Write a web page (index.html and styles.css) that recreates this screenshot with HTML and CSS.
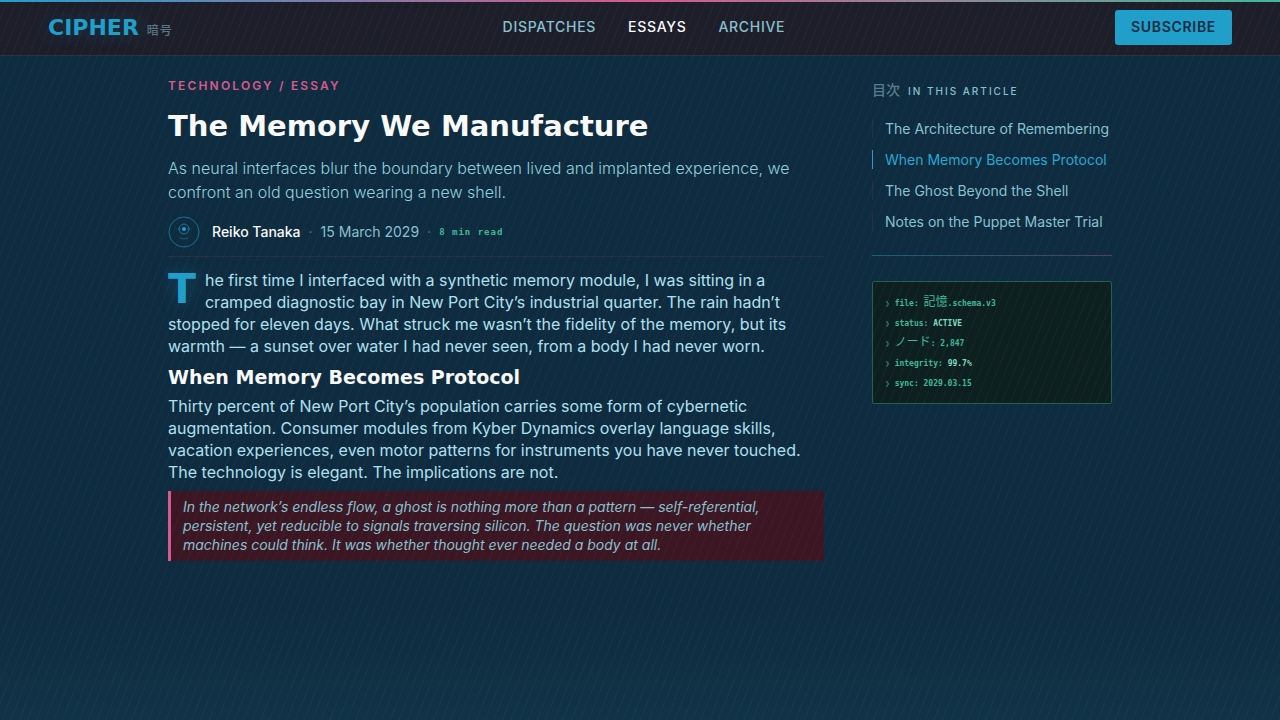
FILE: index.html
```html
<!DOCTYPE html>
<html lang="en">
<head>
<meta charset="utf-8">
<meta name="viewport" content="width=device-width, initial-scale=1">
<title>The Memory We Manufacture — Cipher</title>
<link rel="stylesheet" href="styles.css">
</head>
<body>
<header class="topbar">
  <a class="brand" href="#"><span class="brand-name">CIPHER</span><span class="brand-kanji" lang="ja">暗号</span></a>
  <nav class="nav" aria-label="Main">
    <a href="#">Dispatches</a>
    <a href="#" class="active" aria-current="page">Essays</a>
    <a href="#">Archive</a>
  </nav>
  <button type="button" class="subscribe">Subscribe</button>
</header>
<main class="layout">
  <article class="article">
    <p class="category">Technology / Essay</p>
    <h1>The Memory We Manufacture</h1>
    <p class="deck">As neural interfaces blur the boundary between lived and implanted experience, we confront an old question wearing a new shell.</p>
    <div class="byline">
      <svg class="avatar" viewBox="0 0 32 32" fill="none" stroke="#209fca" aria-hidden="true">
        <circle cx="16" cy="16" r="15" stroke-opacity=".6"/>
        <circle cx="16" cy="13" r="5" stroke-opacity=".65"/>
        <circle cx="16" cy="13" r="2" fill="#209fca" stroke="none"/>
        <path d="M9.5 13h3.5M19 13h3.5" stroke-opacity=".4"/>
        <path d="M12 22q4 2 8 0" stroke-opacity=".45"/>
      </svg>
      <span class="author">Reiko Tanaka</span>
      <span class="dot">·</span>
      <time datetime="2029-03-15">15 March 2029</time>
      <span class="dot">·</span>
      <span class="read">8 min read</span>
    </div>
    <div class="prose">
      <p class="lead">The first time I interfaced with a synthetic memory module, I was sitting in a cramped diagnostic bay in New Port City’s industrial quarter. The rain hadn’t stopped for eleven days. What struck me wasn’t the fidelity of the memory, but its warmth — a sunset over water I had never seen, from a body I had never worn.</p>
      <h2>When Memory Becomes Protocol</h2>
      <p>Thirty percent of New Port City’s population carries some form of cybernetic augmentation. Consumer modules from Kyber Dynamics overlay language skills, vacation experiences, even motor patterns for instruments you have never touched. The technology is elegant. The implications are not.</p>
      <blockquote>In the network’s endless flow, a ghost is nothing more than a pattern — self-referential, persistent, yet reducible to signals traversing silicon. The question was never whether machines could think. It was whether thought ever needed a body at all.</blockquote>
    </div>
  </article>
  <aside class="sidebar">
    <nav class="toc" aria-labelledby="toc-title">
      <h3 id="toc-title"><span class="toc-kanji" lang="ja">目次</span>In this article</h3>
      <ul>
        <li><a href="#">The Architecture of Remembering</a></li>
        <li><a href="#" class="active">When Memory Becomes Protocol</a></li>
        <li><a href="#">The Ghost Beyond the Shell</a></li>
        <li><a href="#">Notes on the Puppet Master Trial</a></li>
      </ul>
    </nav>
    <ul class="terminal">
      <li>file: <span class="jp" lang="ja">記憶</span>.schema.v3</li>
      <li>status: <strong>ACTIVE</strong></li>
      <li><span class="jp" lang="ja">ノード</span>: 2,847</li>
      <li>integrity: <strong>99.7%</strong></li>
      <li>sync: 2029.03.15</li>
    </ul>
  </aside>
</main>
</body>
</html>
```

FILE: styles.css
```css
:root {
  --cyan: #209fca;
  --soft: #88c2d0;
  --pale: #b0e0f0;
  --pink: #d75a8c;
  --green: #40b898;
  --white: #fafafc;
  --ui: Inter, "Noto Sans CJK JP", sans-serif;
  --display: "DejaVu Sans", "Noto Sans CJK JP", sans-serif;
  --mono: "DejaVu Sans Mono", "Noto Sans CJK JP", monospace;
}

* { box-sizing: border-box; margin: 0; padding: 0; }

body {
  min-height: 100vh;
  font-family: var(--ui);
  color: var(--pale);
  background: linear-gradient(#0f2b3f 0%, #0f2b3f 84%, #113347 100%);
}

/* Diagonal scan texture over the whole page */
body::after {
  content: "";
  position: fixed;
  inset: 0;
  pointer-events: none;
  background: repeating-linear-gradient(112deg, transparent 0 7px, rgba(110, 190, 190, .05) 7px 8px);
}

a { color: inherit; text-decoration: none; }
ul { list-style: none; }

.topbar {
  position: relative;
  display: flex;
  justify-content: space-between;
  align-items: center;
  padding: 10px 48px;
  background: #1e1e2a;
  border-bottom: 1px solid #30303d;
}

.topbar::before {
  content: "";
  position: absolute;
  inset: 0 0 auto;
  height: 2px;
  background: linear-gradient(90deg, var(--cyan), var(--pink), var(--green));
}

.brand { display: flex; align-items: baseline; gap: 8px; }
.brand-name {
  font: 700 22px/24px var(--display);
  color: var(--cyan);
  text-shadow: 0 0 20px rgba(32, 159, 202, .3);
}
.brand-kanji { font-size: 12px; line-height: 16px; font-weight: 500; letter-spacing: 1px; color: #567685; }

.nav {
  display: flex;
  gap: 32px;
  padding-bottom: 2px;
  font-size: 14px;
  font-weight: 500;
  line-height: 18px;
  letter-spacing: .05em;
  text-transform: uppercase;
  color: var(--soft);
}
.nav .active { color: var(--white); }

.subscribe {
  padding: 8px 16px 10px;
  border: 0;
  border-radius: 3px;
  font: 600 14px/17px var(--ui);
  letter-spacing: .05em;
  text-transform: uppercase;
  color: #0f2b3f;
  background: var(--cyan);
}

.layout {
  display: grid;
  grid-template-columns: minmax(0, 1fr) 240px;
  gap: 48px;
  max-width: 992px;
  margin: 0 auto;
  padding: 23px 24px;
}

.category {
  font-size: 12px;
  line-height: 14px;
  font-weight: 600;
  letter-spacing: .18em;
  text-transform: uppercase;
  color: var(--pink);
}

h1 {
  margin: 13px 0 10px;
  font: 700 29px/40px var(--display);
  color: var(--white);
}

.deck { max-width: 640px; font-size: 16px; font-weight: 300; line-height: 24px; color: #93d0de; }

.byline {
  display: flex;
  align-items: center;
  gap: 8px;
  margin-top: 12px;
  padding-bottom: 8px;
  border-bottom: 1px solid #2b3040;
  font-size: 14px;
  line-height: 20px;
  color: var(--soft);
}
.avatar { width: 32px; height: 32px; margin-right: 4px; }
.author { font-weight: 500; color: var(--white); }
.dot { color: #567685; }
.read { font: 700 9px/12px var(--mono); letter-spacing: 1px; color: var(--green); }

.prose { padding-top: 12px; font-size: 16px; line-height: 22px; }
.lead::first-letter {
  float: left;
  padding-right: 9px;
  font: 700 41px/40px var(--display);
  color: var(--cyan);
  text-shadow: 0 0 20px rgba(32, 159, 202, .3);
}

h2 {
  margin: 8px 0 6px;
  font: 700 19px/24px var(--display);
  color: var(--white);
}

blockquote {
  margin-top: 8px;
  padding: 6px 12px 7px;
  border-left: 3px solid var(--pink);
  font-size: 14px;
  line-height: 19px;
  font-style: italic;
  color: var(--soft);
  background: #3c1623;
}

.toc { padding-bottom: 25px; background: linear-gradient(90deg, #155f78, #563c5c) bottom / 100% 1px no-repeat; }
.toc h3 {
  display: flex;
  align-items: baseline;
  gap: 8px;
  padding-top: 1px;
  margin-bottom: 18px;
  font-size: 10px;
  line-height: 20px;
  font-weight: 500;
  letter-spacing: .2em;
  text-transform: uppercase;
  color: var(--soft);
}
.toc-kanji { font-size: 14px; letter-spacing: 0; color: #567f8e; }
.toc ul { display: grid; gap: 12px; }
.toc li a {
  display: block;
  padding-left: 12px;
  border-left: 1px solid #2b3040;
  font-size: 14px;
  line-height: 19px;
  color: var(--soft);
  white-space: nowrap;
}
.toc li a.active { color: #28a7d0; border-color: var(--cyan); }

.terminal {
  display: grid;
  gap: 4px;
  margin-top: 25px;
  padding: 14px 12px 11px;
  border: 1px solid #226050;
  border-radius: 2px;
  font: 700 8px/16px var(--mono);
  color: var(--green);
  background: #0d201f;
}
.terminal li::before { content: "❯ "; color: #2d806c; }
.terminal strong { color: #7fdcc0; }
.jp { font-size: 12px; font-weight: 400; line-height: 12px; }
```
